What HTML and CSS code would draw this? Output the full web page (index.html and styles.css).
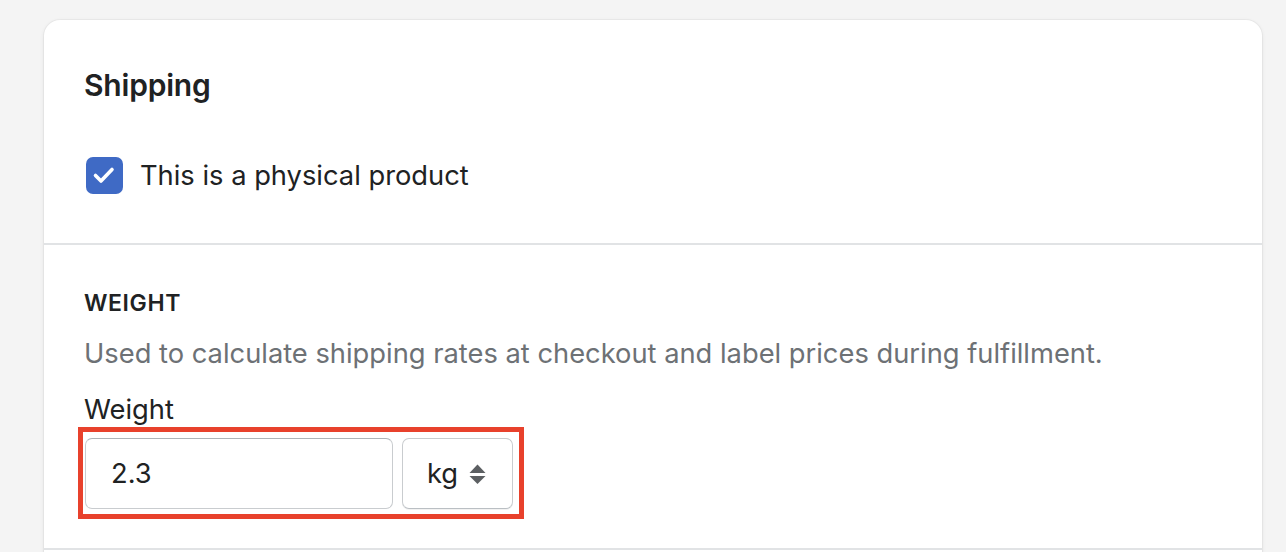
FILE: index.html
```html
<!DOCTYPE html>
<html lang="en">
<head>
<meta charset="utf-8">
<title>Shipping</title>
<link rel="stylesheet" href="styles.css">
</head>
<body>
<div class="card">
  <section class="section section-top">
    <h2 class="title">Shipping</h2>
    <label class="check-row">
      <span class="checkbox">
        <svg viewBox="0 0 37 37" width="37" height="37"><path d="M9.5 18.5l5.5 5.5 11-11.5" fill="none" stroke="#fff" stroke-width="3.6" stroke-linecap="round" stroke-linejoin="round"/></svg>
      </span>
      <span class="check-label">This is a physical product</span>
    </label>
  </section>
  <section class="section section-weight">
    <h3 class="subheading">WEIGHT</h3>
    <p class="help">Used to calculate shipping rates at checkout and label prices during fulfillment.</p>
    <div class="field-label">Weight</div>
    <div class="field-group">
      <div class="input">2.3</div>
      <div class="select">
        <span>kg</span>
        <svg class="arrows" viewBox="0 0 17 20" width="17" height="20"><path d="M8.5 0.5L16.5 9H0.5z" fill="#5c5f62"/><path d="M8.5 20L16.5 12H0.5z" fill="#5c5f62"/></svg>
      </div>
      <div class="highlight"></div>
    </div>
  </section>
  <section class="section section-next"></section>
</div>
</body>
</html>
```
FILE: styles.css
```css
html, body {
  margin: 0;
  padding: 0;
}
body {
  background: #f4f4f4;
  font-family: Inter, "Liberation Sans", Arial, sans-serif;
  color: #202223;
  padding: 20px 24px 0 44px;
  height: 552px;
  box-sizing: border-box;
  overflow: hidden;
}
.card {
  background: #fff;
  border-radius: 16px;
  box-shadow: 0 0 0 1px rgba(0,0,0,0.03), 0 1px 4px rgba(0,0,0,0.08);
  overflow: hidden;
}
.section {
  padding: 0 40px;
}
.section-top {
  padding-top: 47px;
  height: 225px;
  box-sizing: border-box;
  border-bottom: 2px solid #e1e3e5;
}
.title {
  margin: 0;
  font-size: 30px;
  font-weight: 600;
  line-height: 36px;
  letter-spacing: -0.2px;
}
.check-row {
  display: flex;
  align-items: center;
  gap: 17px;
  margin-top: 54px;
  margin-left: 2px;
}
.checkbox {
  width: 37px;
  height: 37px;
  border-radius: 7px;
  background: #3f6ac5;
  display: flex;
  align-items: center;
  justify-content: center;
}
.check-label {
  font-size: 27.3px;
  line-height: 36px;
}
.section-weight {
  padding-top: 43px;
  height: 305px;
  box-sizing: border-box;
  border-bottom: 2px solid #e1e3e5;
}
.subheading {
  margin: 0;
  font-size: 23px;
  font-weight: 600;
  line-height: 30px;
  letter-spacing: 0.6px;
}
.help {
  margin: 19px 0 0;
  font-size: 27.3px;
  line-height: 34px;
  color: #6d7175;
}
.field-label {
  margin-top: 22px;
  font-size: 27.3px;
  line-height: 34px;
}
.field-group {
  position: relative;
  display: flex;
  gap: 9px;
  margin-top: 11px;
  margin-left: 1px;
}
.input {
  width: 308px;
  height: 71px;
  box-sizing: border-box;
  border: 1.5px solid #c9cccf;
  border-top-color: #aeb4b9;
  border-radius: 7px;
  padding: 0 25px;
  display: flex;
  align-items: center;
  font-size: 27.3px;
}
.select {
  width: 111px;
  height: 71px;
  box-sizing: border-box;
  border: 1.5px solid #c9cccf;
  border-bottom-color: #babfc3;
  border-radius: 7px;
  padding: 0 26px 0 24px;
  display: flex;
  align-items: center;
  justify-content: space-between;
  font-size: 27.3px;
  box-shadow: 0 1px 0 rgba(0,0,0,0.05);
}
.highlight {
  position: absolute;
  left: -7px;
  top: -11px;
  width: 446px;
  height: 92px;
  box-sizing: border-box;
  border: 5px solid #e8412c;
  pointer-events: none;
}
.section-next {
  height: 60px;
}
```
